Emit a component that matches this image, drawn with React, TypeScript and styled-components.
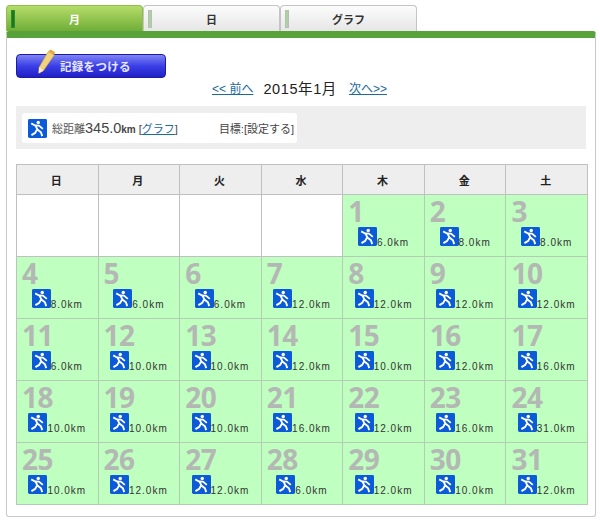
import React from 'react';
import styled, { createGlobalStyle } from 'styled-components';

const GlobalStyle = createGlobalStyle`
  html, body {
    margin: 0;
    padding: 0;
    background: #fff;
    font-family: "Liberation Sans", "Noto Sans CJK JP", sans-serif;
  }
`;

type DayEntry = { day: number; distance: string };

const WEEK_DAYS = ['日', '月', '火', '水', '木', '金', '土'];

const DISTANCES = [
  '6.0', '8.0', '8.0', '8.0', '6.0', '6.0', '12.0', '12.0', '12.0', '12.0',
  '6.0', '10.0', '10.0', '12.0', '10.0', '12.0', '16.0', '10.0', '10.0', '10.0',
  '16.0', '12.0', '16.0', '31.0', '10.0', '12.0', '12.0', '6.0', '12.0', '10.0', '12.0',
];

const ENTRIES: DayEntry[] = DISTANCES.map((distance, i) => ({ day: i + 1, distance }));

const RunnerIcon = () => (
  <IconBox viewBox="0 0 20 20">
    <rect width="20" height="20" rx="1.5" fill="#0b5bd8" />
    <circle cx="10.8" cy="3.6" r="1.8" fill="#fff" />
    <path
      d="M3.4 4.6 L7.4 6.8 L11.6 7 L15.6 10.4 M7.8 7 L10.2 11.4 L13.6 14 L15 18 M9.4 11.4 L7.6 14.6 L3.6 17"
      fill="none"
      stroke="#fff"
      strokeWidth="2"
      strokeLinejoin="round"
    />
  </IconBox>
);

const PencilIcon = () => (
  <PencilSvg viewBox="0 0 20 30">
    <path d="M12 3 L19 7 L6.5 25 L1 28 L1.5 21 Z" fill="#f1d27e" stroke="#c89a3a" strokeWidth="0.7" />
    <path d="M12 3 L14.5 0.6 L19.8 3.6 L19 7 Z" fill="#e8a83c" />
    <path d="M1.5 21 L6.5 25 L1 28 Z" fill="#f8eed6" />
  </PencilSvg>
);

const App = () => {
  const blanks = [0, 1, 2, 3];

  return (
    <Page>
      <GlobalStyle />
      <TabRow>
        <Tab $active>
          <TabMark $active />
          月
        </Tab>
        <Tab>
          <TabMark />
          日
        </Tab>
        <Tab>
          <TabMark />
          グラフ
        </Tab>
      </TabRow>

      <Panel>
        <RecordButton>
          <PencilIcon />
          記録をつける
        </RecordButton>

        <MonthNav>
          <NavLink href="#">&lt;&lt; 前へ</NavLink>
          <MonthTitle>2015年1月</MonthTitle>
          <NavLink href="#">次へ&gt;&gt;</NavLink>
        </MonthNav>

        <SummaryBar>
          <SummaryCard>
            <RunnerIcon />
            <SummaryLabel>総距離</SummaryLabel>
            <SummaryValue>345.0</SummaryValue>
            <SummaryUnit>km</SummaryUnit>
            <SummaryText>
              [<NavLink href="#">グラフ</NavLink>]
            </SummaryText>
            <GoalText>目標:[設定する]</GoalText>
          </SummaryCard>
        </SummaryBar>

        <Calendar>
          {WEEK_DAYS.map((name) => (
            <HeadCell key={name}>{name}</HeadCell>
          ))}
          {blanks.map((b) => (
            <BlankCell key={b} />
          ))}
          {ENTRIES.map((entry) => (
            <DayCell key={entry.day}>
              <DayNumber>{entry.day}</DayNumber>
              <DayRecord>
                <RunnerIcon />
                <DayDistance>{entry.distance}km</DayDistance>
              </DayRecord>
            </DayCell>
          ))}
        </Calendar>
      </Panel>
    </Page>
  );
};

export default App;

const Page = styled.div`
  width: 600px;
  height: 524px;
  padding: 5px 4px 0 6px;
  box-sizing: border-box;
  overflow: hidden;
`;

const TabRow = styled.div`
  display: flex;
  height: 26px;
`;

const Tab = styled.div<{ $active?: boolean }>`
  position: relative;
  width: 137px;
  box-sizing: border-box;
  display: flex;
  align-items: center;
  justify-content: center;
  font-size: 11px;
  font-weight: bold;
  color: ${(p) => (p.$active ? '#fff' : '#333')};
  background: ${(p) =>
    p.$active
      ? 'linear-gradient(#b5dc68, #6fae38)'
      : 'linear-gradient(#fcfcfc, #e6e6e6)'};
  border: 1px solid ${(p) => (p.$active ? '#8fc04e' : '#c4c4c4')};
  border-bottom: none;
  border-radius: 4px 4px 0 0;
`;

const TabMark = styled.span<{ $active?: boolean }>`
  position: absolute;
  left: 4px;
  top: 4px;
  width: 4px;
  height: 18px;
  background: ${(p) => (p.$active ? '#187a1c' : '#a8d69a')};
  border: 1px solid ${(p) => (p.$active ? '#2e8a2e' : '#bbb')};
  box-sizing: border-box;
`;

const Panel = styled.div`
  height: 486px;
  box-sizing: border-box;
  border: 1px solid #c8c8c8;
  border-top: 7px solid #58a23c;
  border-radius: 3px;
  padding: 16px 9px 0;
`;

const RecordButton = styled.div`
  position: relative;
  width: 150px;
  height: 24px;
  box-sizing: border-box;
  padding-left: 43px;
  display: flex;
  align-items: center;
  font-size: 11.5px;
  font-weight: bold;
  letter-spacing: 0.3px;
  color: #e8e8ff;
  background: linear-gradient(#7f84f4, #3b3fe6 50%, #2120c8);
  border: 1px solid #1c1c9c;
  border-radius: 4px;
`;

const PencilSvg = styled.svg`
  position: absolute;
  left: 20px;
  top: -6px;
  width: 19px;
  height: 26px;
`;

const MonthNav = styled.div`
  display: flex;
  justify-content: center;
  align-items: center;
  gap: 10px;
  height: 20px;
  margin: -1px 0 0 -3px;
`;

const NavLink = styled.a`
  font-size: 12px;
  color: #1a6a9c;
  text-decoration: underline;
`;

const MonthTitle = styled.span`
  font-size: 14.5px;
  letter-spacing: 0.6px;
  margin-right: 2px;
  color: #222;
`;

const SummaryBar = styled.div`
  margin-top: 9px;
  height: 43px;
  box-sizing: border-box;
  padding: 7px 6px 6px;
  background: #eeeeee;
`;

const SummaryCard = styled.div`
  width: 275px;
  height: 30px;
  box-sizing: border-box;
  padding-left: 6px;
  display: flex;
  align-items: center;
  background: #fff;
  border-radius: 3px;
  color: #444;
`;

const IconBox = styled.svg`
  width: 19px;
  height: 19px;
  flex: none;
`;

const SummaryLabel = styled.span`
  margin-left: 5px;
  font-size: 11px;
  color: #555;
`;

const SummaryValue = styled.span`
  font-size: 14.5px;
  color: #444;
`;

const SummaryUnit = styled.span`
  font-size: 10px;
  font-weight: bold;
  margin-top: 3px;
`;

const SummaryText = styled.span`
  margin-left: 3px;
  font-size: 11px;

  ${NavLink} {
    font-size: 11px;
  }
`;

const GoalText = styled.span`
  margin-left: 41px;
  font-size: 11px;
  white-space: nowrap;
`;

const Calendar = styled.div`
  margin-top: 15px;
  width: 572px;
  display: grid;
  grid-template-columns: repeat(7, 1fr);
  grid-template-rows: 30px repeat(5, 62px);
  box-sizing: border-box;
  border-top: 1px solid #c0c0c0;
  border-left: 1px solid #c0c0c0;
`;

const HeadCell = styled.div`
  display: flex;
  align-items: center;
  justify-content: center;
  padding-right: 2px;
  font-size: 11px;
  font-weight: bold;
  color: #222;
  background: #eeeeee;
  border-right: 1px solid #c0c0c0;
  border-bottom: 1px solid #c0c0c0;
`;

const BlankCell = styled.div`
  background: #fff;
  border-right: 1px solid #c0c0c0;
  border-bottom: 1px solid #c0c0c0;
`;

const DayCell = styled.div`
  box-sizing: border-box;
  padding: 0 0 0 5px;
  background: #bfffbf;
  border-right: 1px solid #b4ccb4;
  border-bottom: 1px solid #b4ccb4;
  display: flex;
  flex-direction: column;
`;

const DayNumber = styled.div`
  font-family: "Open Sans", "Liberation Sans", sans-serif;
  font-size: 28px;
  line-height: 32px;
  letter-spacing: -0.5px;
  font-weight: bold;
  color: #b4b8b4;
`;

const DayRecord = styled.div`
  display: flex;
  align-items: flex-end;
  justify-content: center;
  margin: 0 5px 0 0;
`;

const DayDistance = styled.span`
  position: relative;
  top: 2px;
  font-size: 10px;
  letter-spacing: 1px;
  line-height: 11px;
  color: #333;
`;
